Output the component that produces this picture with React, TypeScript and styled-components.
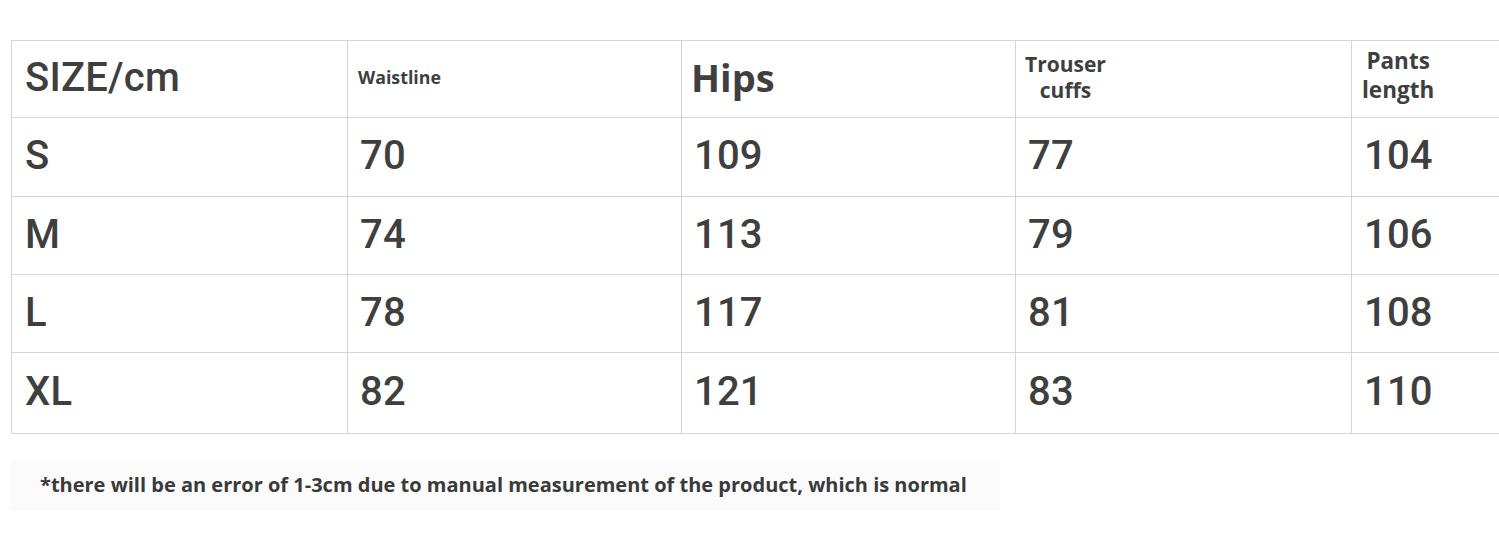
import React from "react";
import styled, { createGlobalStyle } from "styled-components";

const Global = createGlobalStyle`
  html, body { margin: 0; padding: 0; background: #ffffff; }
  body { width: 1499px; height: 546px; overflow: hidden; }
`;

const Page = styled.div`
  padding: 40px 0 0 11px;
  box-sizing: border-box;
  width: 1499px;
  height: 546px;
  color: #3f3f3f;
`;

const Table = styled.div`
  display: grid;
  grid-template-columns: 336px 334px 334px 336px 1fr;
  grid-template-rows: 77px 79px 78px 78px 81px;
  border-top: 1px solid #d6d6d6;
  width: 1500px;
`;

const Cell = styled.div<{ $pad?: number; $lift?: number }>`
  box-sizing: border-box;
  border-left: 1px solid #d3d3d3;
  border-bottom: 1px solid #d6d6d6;
  display: flex;
  align-items: center;
  padding-left: ${(p) => p.$pad ?? 12}px;
  padding-bottom: ${(p) => p.$lift ?? 2}px;
`;

const Value = styled.span`
  font-family: Roboto, "Liberation Sans", Arial, sans-serif;
  font-weight: 500;
  font-size: 40px;
  line-height: 1;
  letter-spacing: 0.2px;
`;

const HeadLabel = styled.span<{ $size: number; $lh?: number }>`
  font-family: "Open Sans", "DejaVu Sans", sans-serif;
  font-weight: 700;
  font-size: ${(p) => p.$size}px;
  line-height: ${(p) => p.$lh ?? 1.1};
  text-align: center;
  display: inline-block;
`;

const FooterBox = styled.div`
  margin: 27px 0 0 -1px;
  width: 990px;
  height: 50px;
  background: #fbfbfb;
  display: flex;
  align-items: center;
  padding-left: 30px;
  padding-bottom: 4px;
  box-sizing: border-box;
`;

const Note = styled.span`
  font-family: "Open Sans", "DejaVu Sans", sans-serif;
  font-weight: 700;
  font-size: 20px;
  color: #3a3a3a;
  white-space: nowrap;
`;

const rows = [
  ["S", "70", "109", "77", "104"],
  ["M", "74", "113", "79", "106"],
  ["L", "78", "117", "81", "108"],
  ["XL", "82", "121", "83", "110"],
];

export default function App() {
  return (
    <>
      <Global />
      <Page>
        <Table>
          <Cell $pad={13}>
            <Value>SIZE/cm</Value>
          </Cell>
          <Cell $pad={10}>
            <HeadLabel $size={17.8}>Waistline</HeadLabel>
          </Cell>
          <Cell $pad={9}>
            <HeadLabel $size={38}>Hips</HeadLabel>
          </Cell>
          <Cell $pad={9}>
            <HeadLabel $size={21} $lh={1.22}>
              Trouser
              <br />
              cuffs
            </HeadLabel>
          </Cell>
          <Cell $pad={10} $lift={8}>
            <HeadLabel $size={22.5} $lh={1.3}>
              Pants
              <br />
              length
            </HeadLabel>
          </Cell>
          {rows.map((r) =>
            r.map((v, i) => (
              <Cell key={r[0] + i} $pad={i === 0 ? 13 : 12}>
                <Value>{v}</Value>
              </Cell>
            ))
          )}
        </Table>
        <FooterBox>
          <Note>
            *there will be an error of 1-3cm due to manual measurement of the product, which is normal
          </Note>
        </FooterBox>
      </Page>
    </>
  );
}
